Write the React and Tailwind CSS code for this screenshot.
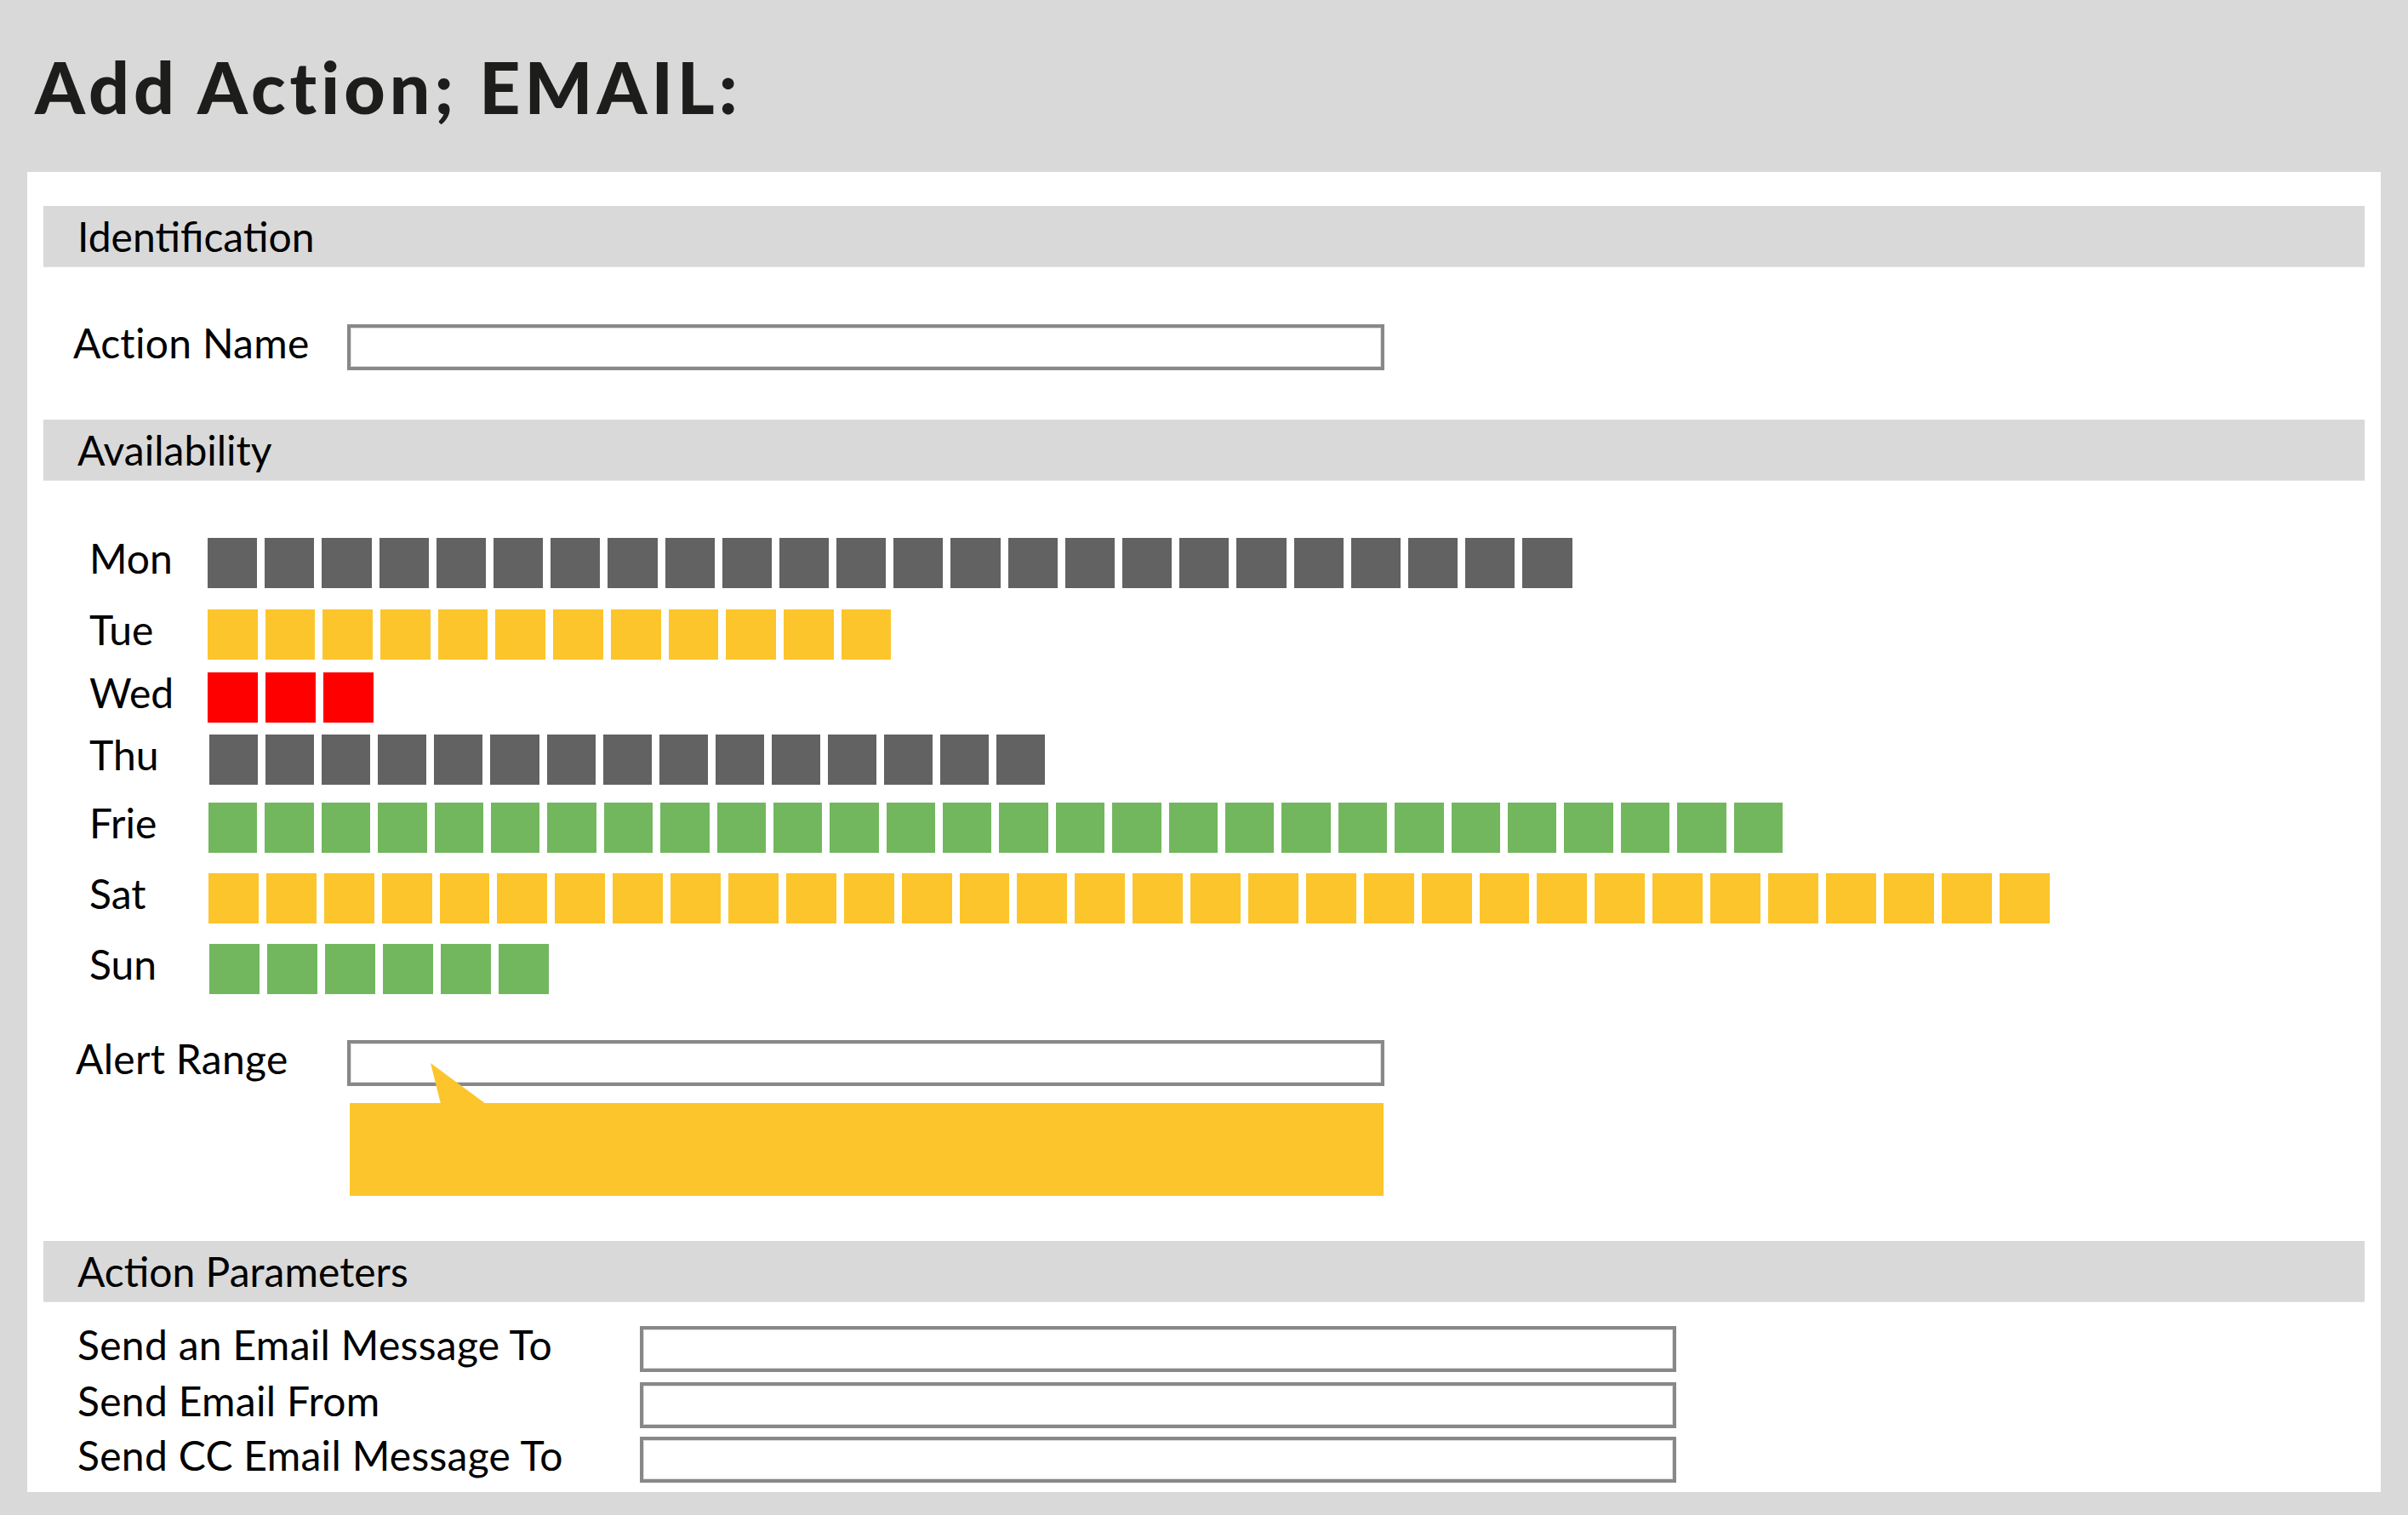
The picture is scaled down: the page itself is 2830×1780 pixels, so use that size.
import React from 'react';

const days = [
  { name: 'Mon', count: 24, color: 'bg-[#626262]', box: 'w-[58.2px]', row: 'mt-[67px]', shift: 'ml-0' },
  { name: 'Tue', count: 12, color: 'bg-[#fcc52c]', box: 'w-[58.7px]', row: 'mt-[25px]', shift: 'ml-0' },
  { name: 'Wed', count: 3, color: 'bg-[#ff0000]', box: 'w-[59px]', row: 'mt-[15px]', shift: 'ml-0' },
  { name: 'Thu', count: 15, color: 'bg-[#626262]', box: 'w-[57.1px]', row: 'mt-[14px]', shift: 'ml-[2px]' },
  { name: 'Frie', count: 28, color: 'bg-[#72b75e]', box: 'w-[57.4px]', row: 'mt-[21px]', shift: 'ml-[1px]' },
  { name: 'Sat', count: 32, color: 'bg-[#fcc52c]', box: 'w-[58.9px]', row: 'mt-[24px]', shift: 'ml-[1px]' },
  { name: 'Sun', count: 6, color: 'bg-[#72b75e]', box: 'w-[59px]', row: 'mt-[24px]', shift: 'ml-[2px]' },
];

const params = [
  { label: 'Send an Email Message To', row: 'mt-[28px]' },
  { label: 'Send Email From', row: 'mt-[12px]' },
  { label: 'Send CC Email Message To', row: 'mt-[10px]' },
];

const SectionBar = ({ title, className = '' }) => (
  <div className={`h-[72px] bg-[#d9d9d9] border-b border-[#e4e4e4] pl-[40px] text-[48px] leading-[72px] text-black ${className}`}>
    {title}
  </div>
);

const TextBox = ({ className = '' }) => (
  <div className={`h-[54px] border-[4px] border-[#888888] bg-white shadow-[inset_0_0_0_1px_#dedede] ${className}`} />
);

const DayRow = ({ day }) => (
  <div className={`flex items-start ${day.row}`}>
    <div className="w-[193px] shrink-0 pl-[54px] pt-[3px] text-[48px] leading-[42px] text-black">{day.name}</div>
    <div className={`flex gap-[9px] ${day.shift}`}>
      {Array.from({ length: day.count }).map((_, i) => (
        <div key={i} className={`h-[59px] ${day.box} ${day.color}`} />
      ))}
    </div>
  </div>
);

export default function App() {
  return (
    <div className="w-[2830px] h-[1780px] overflow-hidden bg-[#d9d9d9] font-['Lato',sans-serif]">
      <h1 className="pl-[41px] pt-[60px] text-[84px] leading-none font-black tracking-[5px] text-[#1d1d1b]">
        Add Action; EMAIL:
      </h1>

      <div className="mt-[58px] ml-[32px] w-[2766px] h-[1551px] bg-white px-[19px] pt-[40px]">
        <SectionBar title="Identification" />

        <div className="mt-[67px] flex items-start">
          <div className="w-[357px] shrink-0 pl-[35px] pt-[1px] text-[48px] leading-[42px] tracking-[0.3px] text-black">Action Name</div>
          <TextBox className="w-[1219px]" />
        </div>

        <SectionBar title="Availability" className="mt-[58px]" />

        {days.map((d) => (
          <DayRow key={d.name} day={d} />
        ))}

        <div className="mt-[54px] flex items-start">
          <div className="w-[357px] shrink-0 pl-[38px] pt-[1px] text-[48px] leading-[42px] tracking-[0.3px] text-black">Alert Range</div>
          <TextBox className="w-[1219px]" />
        </div>

        {/* alert range callout */}
        <div className="relative mt-[20px] ml-[360px] w-[1215px] h-[109px] bg-[#fcc52c]">
          <svg className="absolute left-[95px] -top-[47px]" width="65" height="48" viewBox="0 0 65 48">
            <polygon points="0,0 12,48 65,48" fill="#fcc52c" />
          </svg>
        </div>

        <SectionBar title="Action Parameters" className="mt-[53px]" />

        {params.map((p) => (
          <div key={p.label} className={`flex items-start ${p.row}`}>
            <div className="w-[701px] shrink-0 pl-[40px] pt-[1px] text-[48px] leading-[42px] tracking-[0.3px] text-black">{p.label}</div>
            <TextBox className="w-[1218px]" />
          </div>
        ))}
      </div>
    </div>
  );
}
